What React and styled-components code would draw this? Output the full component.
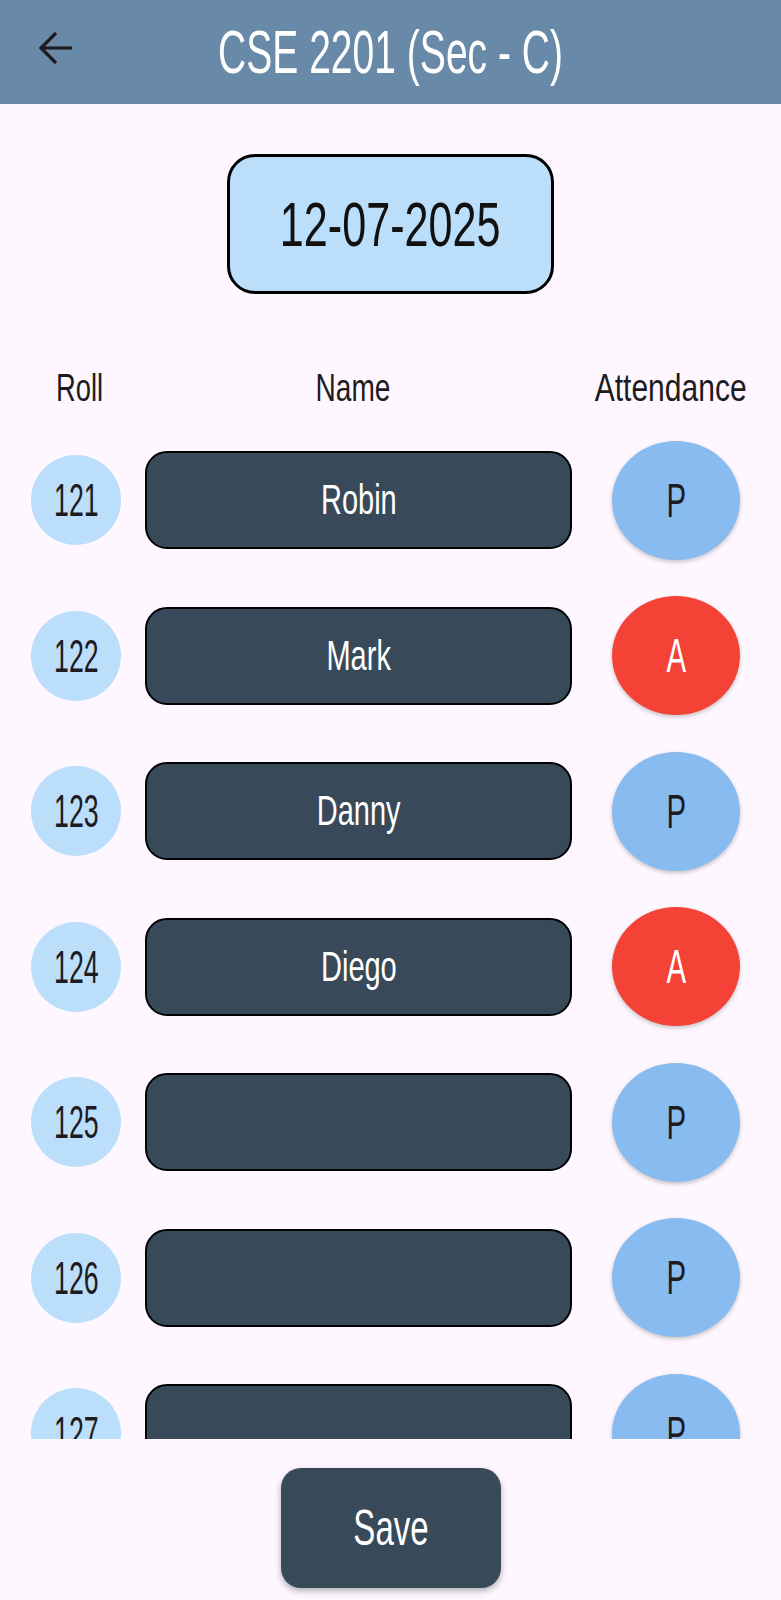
import React from 'react'
import styled, { createGlobalStyle } from 'styled-components'

const FONT = '"Liberation Sans", Arial, sans-serif'

const students = [
  { roll: 121, name: 'Robin', status: 'P' },
  { roll: 122, name: 'Mark', status: 'A' },
  { roll: 123, name: 'Danny', status: 'P' },
  { roll: 124, name: 'Diego', status: 'A' },
  { roll: 125, name: '', status: 'P' },
  { roll: 126, name: '', status: 'P' },
  { roll: 127, name: '', status: 'P' }
]

const GlobalStyle = createGlobalStyle`
  html, body {
    margin: 0;
    padding: 0;
    background: #fef7ff;
  }
  body {
    font-family: ${FONT};
  }
`

const Screen = styled.div`
  width: 781px;
  height: 1600px;
  display: flex;
  flex-direction: column;
  background: #fef7ff;
  overflow: hidden;
`

const AppBar = styled.header`
  flex: none;
  height: 104px;
  background: #6889a8;
  display: grid;
  grid-template-columns: 1fr auto 1fr;
  align-items: center;
`

const BackButton = styled.button`
  justify-self: start;
  margin: -8px 0 0 39px;
  padding: 0;
  border: 0;
  background: none;
  display: flex;
  cursor: pointer;
`

const Title = styled.h1`
  margin: 0;
  display: flex;
  justify-content: center;
  font-weight: 400;
  font-size: 61px;
  line-height: 1;
  color: #fff;
`

// the app font is a condensed face, so text is narrowed to match
const Squeeze = styled.span`
  display: inline-block;
  white-space: nowrap;
  transform: scaleX(${props => props.$sx || 0.69});
`

const DateChip = styled.div`
  align-self: center;
  margin-top: 50px;
  width: 327px;
  height: 140px;
  box-sizing: border-box;
  border: 3px solid #000;
  border-radius: 28px;
  background: #bbdefb;
  display: flex;
  align-items: center;
  justify-content: center;
  font-size: 63px;
  line-height: 1;
  color: #111;
`

const LabelRow = styled.div`
  flex: none;
  display: flex;
  padding-left: 31px;
  margin-top: 74px;
  font-size: 39px;
  line-height: 1;
  color: #1d1b20;
`

const Label = styled.div`
  width: ${props => props.$w}px;
  margin-left: ${props => props.$ml || 0}px;
  padding: 0 ${props => props.$pr || 0}px 0 ${props => props.$pl || 0}px;
  box-sizing: border-box;
  display: flex;
  justify-content: center;
`

const List = styled.div`
  flex: none;
  height: 1032px;
  box-sizing: border-box;
  padding-top: 33.5px;
  overflow: hidden;
  display: flex;
  flex-direction: column;
  gap: 36.5px;
`

const Row = styled.div`
  flex: none;
  height: 119px;
  display: flex;
  align-items: center;
  padding-left: 31px;
`

const RollBadge = styled.div`
  width: 90px;
  height: 90px;
  border-radius: 50%;
  background: #bbdefb;
  display: flex;
  align-items: center;
  justify-content: center;
  font-size: 46px;
  line-height: 1;
  color: #1d1b20;
`

const NamePill = styled.div`
  margin-left: 24px;
  width: 427px;
  height: 98px;
  box-sizing: border-box;
  border: 2px solid #000;
  border-radius: 22px;
  background: #38495a;
  display: flex;
  align-items: center;
  justify-content: center;
  font-size: 42px;
  line-height: 1;
  color: #fff;
`

const MarkButton = styled.button`
  margin-left: 40px;
  width: 128px;
  height: 119px;
  padding: 0;
  border: 0;
  border-radius: 50%;
  background: ${props => (props.$absent ? '#f44336' : '#88bcf0')};
  color: ${props => (props.$absent ? '#fff' : '#1d1b20')};
  box-shadow: 0 2px 4px rgba(0, 0, 0, 0.22);
  display: flex;
  align-items: center;
  justify-content: center;
  font-family: ${FONT};
  font-size: 49px;
  line-height: 1;
  cursor: pointer;
`

const Footer = styled.footer`
  flex: 1;
  display: flex;
  justify-content: center;
  align-items: flex-start;
  padding-top: 29px;
`

const SaveButton = styled.button`
  width: 220px;
  height: 120px;
  border: 0;
  border-radius: 20px;
  background: #38495a;
  color: #fff;
  box-shadow: 0 3px 6px rgba(0, 0, 0, 0.3);
  display: flex;
  align-items: center;
  justify-content: center;
  font-family: ${FONT};
  font-size: 50px;
  line-height: 1;
  cursor: pointer;
`

const BackArrow = () => (
  <svg width="34" height="34" viewBox="0 0 34 34" fill="none">
    <path
      d="M33 17H2M17 2L2 17l15 15"
      stroke="#1d1b20"
      strokeWidth="3.2"
    />
  </svg>
)

const App = () => (
  <Screen>
    <GlobalStyle />
    <AppBar>
      <BackButton aria-label="Back">
        <BackArrow />
      </BackButton>
      <Title>
        <Squeeze $sx={0.64}>CSE 2201 (Sec - C)</Squeeze>
      </Title>
    </AppBar>

    <DateChip>
      <Squeeze $sx={0.685}>12-07-2025</Squeeze>
    </DateChip>

    <LabelRow>
      <Label $w={90} $pl={8}>
        <Squeeze $sx={0.7}>Roll</Squeeze>
      </Label>
      <Label $w={427} $ml={24} $pr={10}>
        <Squeeze $sx={0.72}>Name</Squeeze>
      </Label>
      <Label $w={128} $ml={40} $pr={10}>
        <Squeeze $sx={0.77}>Attendance</Squeeze>
      </Label>
    </LabelRow>

    <List>
      {students.map(s => (
        <Row key={s.roll}>
          <RollBadge>
            <Squeeze $sx={0.58}>{s.roll}</Squeeze>
          </RollBadge>
          <NamePill>
            <Squeeze $sx={0.69}>{s.name}</Squeeze>
          </NamePill>
          <MarkButton $absent={s.status === 'A'}>
            <Squeeze $sx={0.6}>{s.status}</Squeeze>
          </MarkButton>
        </Row>
      ))}
    </List>

    <Footer>
      <SaveButton>
        <Squeeze $sx={0.66}>Save</Squeeze>
      </SaveButton>
    </Footer>
  </Screen>
)

export default App
